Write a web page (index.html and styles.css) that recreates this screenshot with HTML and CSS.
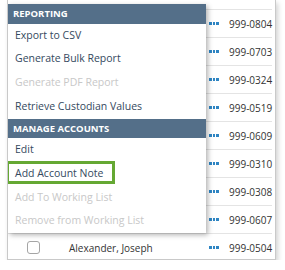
FILE: index.html
```html
<!DOCTYPE html>
<html lang="en">
<head>
  <meta charset="UTF-8">
  <title>Accounts menu</title>
  <link rel="stylesheet" href="styles.css">
</head>
<body>
  <div class="frame">
    <div class="rows">
      <div class="row"><span class="box"></span><span class="name"></span><span class="dots"><i></i><i></i><i></i></span><span class="num">999-0804</span></div>
      <div class="row"><span class="box"></span><span class="name"></span><span class="dots"><i></i><i></i><i></i></span><span class="num">999-0703</span></div>
      <div class="row"><span class="box"></span><span class="name"></span><span class="dots"><i></i><i></i><i></i></span><span class="num">999-0324</span></div>
      <div class="row"><span class="box"></span><span class="name"></span><span class="dots"><i></i><i></i><i></i></span><span class="num">999-0519</span></div>
      <div class="row"><span class="box"></span><span class="name"></span><span class="dots"><i></i><i></i><i></i></span><span class="num">999-0609</span></div>
      <div class="row"><span class="box"></span><span class="name"></span><span class="dots"><i></i><i></i><i></i></span><span class="num">999-0310</span></div>
      <div class="row"><span class="box"></span><span class="name"></span><span class="dots"><i></i><i></i><i></i></span><span class="num">999-0308</span></div>
      <div class="row"><span class="box"></span><span class="name"></span><span class="dots"><i></i><i></i><i></i></span><span class="num">999-0607</span></div>
      <div class="row"><span class="box"></span><span class="name">Alexander, Joseph</span><span class="dots"><i></i><i></i><i></i></span><span class="num">999-0504</span></div>
    </div>

    <!-- контекстное меню поверх таблицы -->
    <div class="menu">
      <div class="menu-head">Reporting</div>
      <div class="menu-item">Export to CSV</div>
      <div class="menu-item">Generate Bulk Report</div>
      <div class="menu-item disabled">Generate PDF Report</div>
      <div class="menu-item">Retrieve Custodian Values</div>
      <div class="menu-head">Manage Accounts</div>
      <div class="menu-item">Edit</div>
      <div class="menu-item marked">Add Account Note</div>
      <div class="menu-item disabled">Add To Working List</div>
      <div class="menu-item disabled">Remove from Working List</div>
    </div>
  </div>
</body>
</html>
```

FILE: styles.css
```css
body {
  margin: 0;
  background-color: #ffffff;
  font-family: 'Open Sans', 'Noto Sans', sans-serif;
}

.frame {
  position: relative;
  width: 269px;
  height: 260px;
  margin-left: 7px;
  border: 1px solid #c9c9c9;
  border-top: none;
  box-sizing: border-box;
  box-shadow: 2px 3px 5px rgba(0, 0, 0, 0.18);
  overflow: hidden;
}

.rows {
  padding-top: 9px;
  margin-right: 3px;
}

.row {
  display: grid;
  grid-template-columns: 19px 13px 29px 1fr 20px 43px;
  align-items: center;
  height: 28px;
  border-top: 1px solid #e4e4e4;
  box-sizing: border-box;
  font-size: 10px;
  color: #333333;
  white-space: nowrap;
}

.box {
  grid-column: 2;
  width: 13px;
  height: 13px;
  border: 1px solid #a5a5a5;
  border-radius: 3px;
  box-sizing: border-box;
}

.name {
  grid-column: 4;
}

.dots {
  grid-column: 5;
  display: flex;
  gap: 1px;
}

.dots i {
  width: 2.5px;
  height: 2.5px;
  background-color: #2e85c3;
}

.num {
  grid-column: 6;
}

.menu {
  position: absolute;
  left: 0;
  top: 4px;
  width: 198px;
  background-color: #ffffff;
  box-shadow: 2px 2px 5px rgba(0, 0, 0, 0.3);
}

.menu-head {
  height: 19.5px;
  line-height: 19.5px;
  padding-left: 5px;
  background-color: #546f89;
  color: #ffffff;
  font-size: 9.5px;
  font-weight: bold;
  text-transform: uppercase;
}

.menu-item {
  position: relative;
  height: 23.75px;
  line-height: 23.75px;
  padding-left: 7px;
  font-size: 10.5px;
  color: #34495e;
}

.menu-item.disabled {
  color: #c8c8c8;
}

/* зелёная рамка-выделение */
.menu-item.marked::after {
  content: '';
  position: absolute;
  left: -2px;
  top: -1px;
  width: 109px;
  height: 23px;
  border: 3px solid #65a833;
  box-sizing: border-box;
}
```
